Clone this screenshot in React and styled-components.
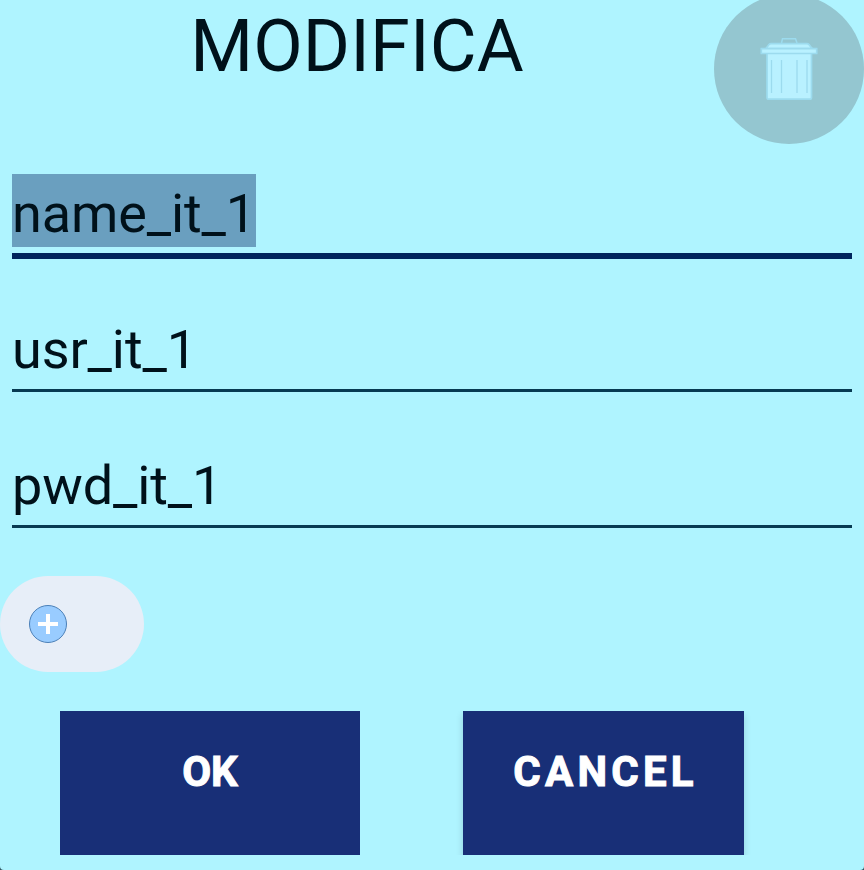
import React from "react";
import styled, { createGlobalStyle } from "styled-components";

const GlobalStyle = createGlobalStyle`
  *, *::before, *::after { box-sizing: border-box; }
  html, body { margin: 0; padding: 0; background: #2f5560; overflow: hidden; }
`;

const Dialog = styled.main`
  display: flex;
  flex-direction: column;
  width: 864px;
  height: 870px;
  overflow: hidden;
  background: #aff4ff;
  border-radius: 0 0 4px 4px;
  color: #00111a;
  font-family: Roboto, "Liberation Sans", sans-serif;
`;

const Header = styled.header`
  display: flex;
  align-items: flex-start;
  height: 144px;
`;

const Title = styled.h1`
  flex: 1;
  margin: 0;
  padding-top: 5px;
  font-size: 72px;
  line-height: 84px;
  font-weight: 400;
  letter-spacing: 0.15px;
  text-align: center;
`;

const DeleteButton = styled.button`
  display: flex;
  align-items: center;
  justify-content: center;
  flex: none;
  width: 150px;
  height: 150px;
  margin: -6px 0 0;
  padding: 0;
  border: 0;
  border-radius: 50%;
  background: #94c6d0;
`;

const Fields = styled.form`
  display: flex;
  flex-direction: column;
  padding: 0 12px;
`;

const Field = styled.div`
  display: flex;
  align-items: flex-end;
  height: ${(p) => (p.$focused ? 115 : 136)}px;
  margin-bottom: ${(p) => (p.$focused ? -3 : 0)}px;
  padding-bottom: 6px;
  border-bottom: ${(p) => (p.$focused ? "6px solid #00245c" : "3px solid #073a52")};
`;

const Value = styled.span`
  height: 73px;
  font-size: 54px;
  line-height: 79px;
  letter-spacing: -0.11px;
  white-space: nowrap;
  background: ${(p) => (p.$selected ? "#6a9fbf" : "transparent")};
`;

const AddButton = styled.button`
  display: flex;
  align-items: center;
  flex: none;
  width: 144px;
  height: 96px;
  margin: 48px 0 0;
  padding: 0 0 0 28px;
  border: 0;
  border-radius: 48px;
  background: #e7eef8;
`;

const Actions = styled.footer`
  display: flex;
  flex: none;
  gap: 103px;
  height: 144px;
  margin-top: 39px;
  padding-left: 60px;
  overflow: hidden;
`;

const ActionButton = styled.button`
  width: ${(p) => p.$width}px;
  height: 144px;
  margin: 0;
  padding: 0 0 22px ${(p) => (p.$raised ? 4 : 0)}px;
  border: 0;
  border-radius: 0;
  background: #182f77;
  color: #fff;
  font: 700 42px/50px Roboto, "Liberation Sans", sans-serif;
  letter-spacing: ${(p) => (p.$raised ? "4.2px" : "0")};
  box-shadow: ${(p) => (p.$raised ? "0 4px 7px rgba(0, 30, 50, 0.17)" : "none")};
  -webkit-text-stroke: 1px #fff;
`;

const TrashIcon = () => (
  <svg width="60" height="66" viewBox="0 0 60 66" fill="#b9f1ff" stroke="#9cdbee" strokeWidth="1.7">
    <path d="M22.5 7l1-4.200h13l1.500 4.200" fill="none" strokeWidth="1.500" />
    <path d="M8 12v49.500q0 1.700 1.700 1.700h41.100q1.700 0 1.700-1.700V12z" />
    <path d="M7 12.500L10 8.500q.7-.8 2-.8h36q1.300 0 2 .8l3 4z" />
    <path d="M2.300 12.700h55.400v4.800h-55.400z" />
    <path d="M12.500 24v33M22.500 24v33M38 24v33M48 24v33" strokeWidth="1.300" />
  </svg>
);

const PlusIcon = () => (
  <svg width="40" height="40" viewBox="0 0 40 40">
    <circle cx="20" cy="20" r="18.500" fill="#99ccff" stroke="#4b80b8" />
    <path d="M10 20h20M20 10v20" stroke="#fff" strokeWidth="4" fill="none" />
  </svg>
);

const fields = ["name_it_1", "usr_it_1", "pwd_it_1"];

export default function App() {
  return (
    <>
      <GlobalStyle />
      <Dialog>
        <Header>
          <Title>MODIFICA</Title>
          <DeleteButton type="button" aria-label="Delete"><TrashIcon /></DeleteButton>
        </Header>
        <Fields>
          {fields.map((value, i) => (
            <Field key={value} $focused={i === 0}>
              <Value $selected={i === 0}>{value}</Value>
            </Field>
          ))}
        </Fields>
        <AddButton type="button" aria-label="Add"><PlusIcon /></AddButton>
        <Actions>
          <ActionButton type="button" $width={300}>OK</ActionButton>
          <ActionButton type="button" $width={281} $raised>CANCEL</ActionButton>
        </Actions>
      </Dialog>
    </>
  );
}
